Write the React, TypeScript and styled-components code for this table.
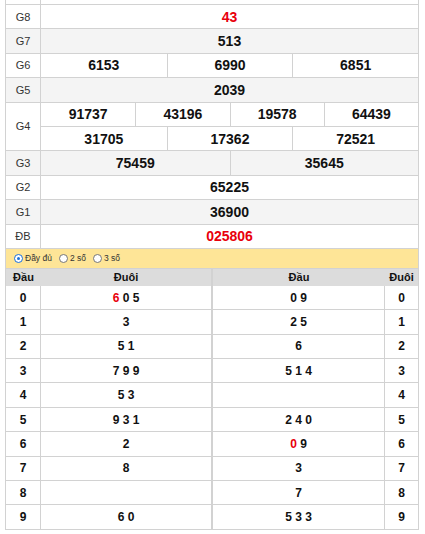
import React from "react";
import styled, { createGlobalStyle } from "styled-components";

const Global = createGlobalStyle`
  html, body { margin: 0; padding: 0; background: #fff; }
  body { font-family: "Liberation Sans", Arial, sans-serif; color: #111; }
`;

const Page = styled.div`
  width: 414px;
  padding-left: 5px;
`;

const Board = styled.div`
  border-left: 1px solid #d2d2d2;
  border-right: 1px solid #d2d2d2;
`;

const Row = styled.div<{ $alt?: boolean; $h?: number }>`
  display: grid;
  grid-template-columns: 35px 1fr;
  height: ${(p) => p.$h ?? 24.4}px;
  box-sizing: border-box;
  border-bottom: 1px solid #d2d2d2;
  background: ${(p) => (p.$alt ? "#f4f4f4" : "#fff")};
`;

const Label = styled.div`
  display: flex;
  align-items: center;
  justify-content: center;
  border-right: 1px solid #d2d2d2;
  font-size: 11px;
  color: #333;
`;

const Values = styled.div`
  display: flex;
  flex-direction: column;
`;

const Line = styled.div<{ $top?: boolean }>`
  flex: 1;
  display: grid;
  grid-auto-flow: column;
  grid-auto-columns: 1fr;
  border-top: ${(p) => (p.$top ? "1px solid #d2d2d2" : "none")};
`;

const Num = styled.div<{ $red?: boolean }>`
  display: flex;
  align-items: center;
  justify-content: center;
  font-size: 14px;
  font-weight: bold;
  color: ${(p) => (p.$red ? "#e8000b" : "#111")};
  & + & { border-left: 1px solid #d2d2d2; }
`;

const Options = styled.div`
  display: flex;
  align-items: center;
  gap: 7px;
  height: 20px;
  padding-left: 8px;
  background: #fee597;
  border-bottom: 1px solid #d2d2d2;
  box-sizing: border-box;
  font-size: 8.5px;
  color: #333;
`;

const Opt = styled.label`
  display: flex;
  align-items: center;
  gap: 2px;
`;

const Radio = styled.span<{ $on?: boolean }>`
  width: 7px;
  height: 7px;
  border-radius: 50%;
  border: 1px solid ${(p) => (p.$on ? "#1a6fd8" : "#777")};
  background: #fff;
  display: inline-flex;
  align-items: center;
  justify-content: center;
  &::after {
    content: "";
    width: 3px;
    height: 3px;
    border-radius: 50%;
    background: ${(p) => (p.$on ? "#1a6fd8" : "transparent")};
  }
`;

const Loto = styled.div`
  display: grid;
  grid-template-columns: 1fr 1fr;
`;

const Half = styled.div<{ $right?: boolean }>`
  display: grid;
  grid-template-columns: ${(p) => (p.$right ? "1fr 33px" : "35px 1fr")};
  border-left: ${(p) => (p.$right ? "1px solid #d2d2d2" : "none")};
  border-right: ${(p) => (p.$right ? "none" : "1px solid #d2d2d2")};
`;

const Head = styled.div`
  height: 17px;
  display: flex;
  align-items: center;
  justify-content: center;
  background: #dcdcdc;
  font-size: 11px;
  font-weight: bold;
`;

const Cell = styled.div<{ $line?: "r" | "l" }>`
  height: 24.4px;
  box-sizing: border-box;
  display: flex;
  align-items: center;
  justify-content: center;
  font-size: 12px;
  font-weight: bold;
  border-bottom: 1px solid #d2d2d2;
  border-right: ${(p) => (p.$line === "r" ? "1px solid #d2d2d2" : "none")};
`;

const Digits = styled.span`
  white-space: pre;
`;

const Red = styled.span`
  color: #e8000b;
`;

type Prize = { label: string; rows: string[][]; red?: boolean };

const prizes: Prize[] = [
  { label: "G8", rows: [["43"]], red: true },
  { label: "G7", rows: [["513"]] },
  { label: "G6", rows: [["6153", "6990", "6851"]] },
  { label: "G5", rows: [["2039"]] },
  { label: "G4", rows: [["91737", "43196", "19578", "64439"], ["31705", "17362", "72521"]] },
  { label: "G3", rows: [["75459", "35645"]] },
  { label: "G2", rows: [["65225"]] },
  { label: "G1", rows: [["36900"]] },
  { label: "ĐB", rows: [["025806"]], red: true },
];

const renderDigits = (s: string, red?: number) => (
  <Digits>
    {s.split(" ").map((d, i) => (
      <React.Fragment key={i}>
        {i > 0 ? " " : ""}
        {red === i ? <Red>{d}</Red> : d}
      </React.Fragment>
    ))}
  </Digits>
);

const dau: { v: string; red?: number }[] = [
  { v: "6 0 5", red: 0 },
  { v: "3" },
  { v: "5 1" },
  { v: "7 9 9" },
  { v: "5 3" },
  { v: "9 3 1" },
  { v: "2" },
  { v: "8" },
  { v: "" },
  { v: "6 0" },
];

const duoi: { v: string; red?: number }[] = [
  { v: "0 9" },
  { v: "2 5" },
  { v: "6" },
  { v: "5 1 4" },
  { v: "" },
  { v: "2 4 0" },
  { v: "0 9", red: 0 },
  { v: "3" },
  { v: "7" },
  { v: "5 3 3" },
];

export default function App() {
  return (
    <Page>
      <Global />
      <Board>
        <Row $h={5}>
          <Label />
          <Values />
        </Row>
        {prizes.map((p, i) => (
          <Row key={p.label} $alt={i % 2 === 1} $h={24.4 * p.rows.length}>
            <Label>{p.label}</Label>
            <Values>
              {p.rows.map((r, j) => (
                <Line key={j} $top={j > 0}>
                  {r.map((n) => (
                    <Num key={n} $red={p.red}>
                      {n}
                    </Num>
                  ))}
                </Line>
              ))}
            </Values>
          </Row>
        ))}
        <Options>
          <Opt>
            <Radio $on />
            Đầy đủ
          </Opt>
          <Opt>
            <Radio />2 số
          </Opt>
          <Opt>
            <Radio />3 số
          </Opt>
        </Options>
        <Loto>
          <Half>
            <Head>Đầu</Head>
            <Head>Đuôi</Head>
            {dau.map((d, i) => (
              <React.Fragment key={i}>
                <Cell $line="r">{i}</Cell>
                <Cell>{renderDigits(d.v, d.red)}</Cell>
              </React.Fragment>
            ))}
          </Half>
          <Half $right>
            <Head>Đầu</Head>
            <Head>Đuôi</Head>
            {duoi.map((d, i) => (
              <React.Fragment key={i}>
                <Cell $line="r">{renderDigits(d.v, d.red)}</Cell>
                <Cell>{i}</Cell>
              </React.Fragment>
            ))}
          </Half>
        </Loto>
      </Board>
    </Page>
  );
}
